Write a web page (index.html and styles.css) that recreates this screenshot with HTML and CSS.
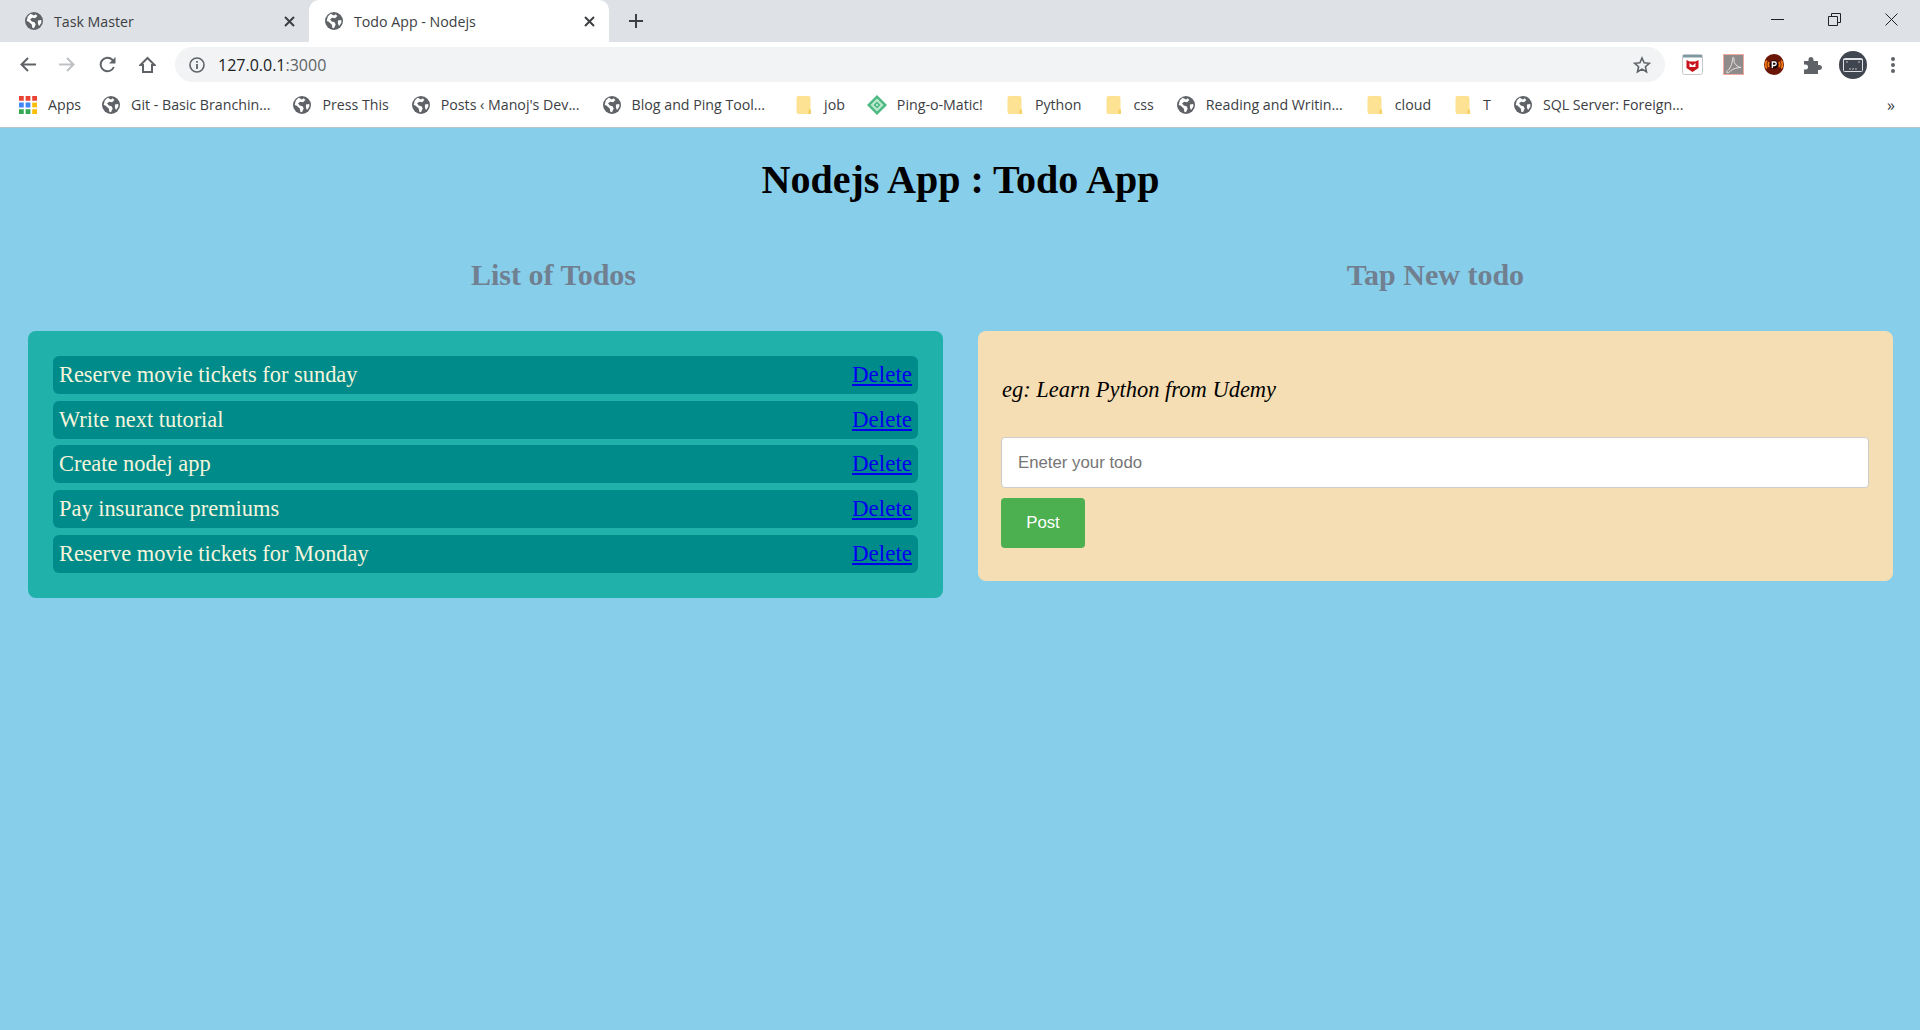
FILE: index.html
```html
<!DOCTYPE html>
<html lang="en">
<head>
    <meta charset="UTF-8">
    <meta name="viewport" content="width=device-width, initial-scale=1.0">
    <title>Todo App - Nodejs</title>
    <link rel="stylesheet" href="styles.css">
</head>
<body>
    <svg class="sprites" width="0" height="0">
        <symbol id="globe" viewBox="0 0 16 16">
            <circle cx="8" cy="8" r="8" fill="#5f6368"/>
            <path d="M5 1.500 8 3 9.500 2 11 3.500 9 5.500 6.500 5 4.500 6.500 6 8.500 8.500 9 9.500 11 8 14.500 6.500 14 6 11 3 8.500 1.500 8 2.500 4z M11.500 7.500 14.500 7 14.500 9.500 12.500 12.500 11.500 10.500z" fill="#fff"/>
        </symbol>
        <symbol id="folder" viewBox="0 0 16 18">
            <path d="M2 0h10a2 2 0 0 1 2 2v16H2a2 2 0 0 1-2-2V2a2 2 0 0 1 2-2z" transform="translate(.5 0)" fill="#fde293"/>
            <path d="M12.500 18v-3.500l1-1.500 1.500 1v4z" fill="#f5cf5f"/>
        </symbol>
        <symbol id="close" viewBox="0 0 11 11">
            <path d="M1 1l9 9M10 1l-9 9" stroke="#3c4043" stroke-width="2" fill="none"/>
        </symbol>
    </svg>

    <header class="chrome">
        <div class="tabstrip">
            <div class="tab">
                <svg class="fav"><use href="#globe"/></svg>
                <span class="tab-title">Task Master</span>
                <svg class="tab-close"><use href="#close"/></svg>
            </div>
            <div class="tab active">
                <svg class="fav"><use href="#globe"/></svg>
                <span class="tab-title">Todo App - Nodejs</span>
                <svg class="tab-close"><use href="#close"/></svg>
            </div>
            <svg class="newtab" width="14" height="14" viewBox="0 0 14 14"><path d="M7 0v14M0 7h14" stroke="#3c4043" stroke-width="2"/></svg>
            <div class="winbtns">
                <svg width="13" height="13" viewBox="0 0 13 13"><path d="M0 6.500h13" stroke="#222" fill="none"/></svg>
                <svg width="13" height="13" viewBox="0 0 13 13"><path d="M.5 3.500h9v9h-9zM3.500 3.500v-3h9v9h-3" stroke="#222" fill="none"/></svg>
                <svg width="13" height="13" viewBox="0 0 13 13"><path d="M.5.500l12 12M12.500.500l-12 12" stroke="#222" fill="none"/></svg>
            </div>
        </div>

        <div class="toolbar">
            <svg class="navicon" viewBox="0 0 17 17"><path d="M17 8.500H2.500M9 2 2.500 8.500 9 15" stroke="#5f6368" stroke-width="2" fill="none"/></svg>
            <svg class="navicon" viewBox="0 0 17 17"><path d="M0 8.500h14.500M8 2l6.500 6.500L8 15" stroke="#bdc1c6" stroke-width="2" fill="none"/></svg>
            <svg class="navicon" viewBox="0 0 17 17"><path d="M14.800 11A6.800 6.800 0 1 1 13.300 3.700L15 5.500" stroke="#5f6368" stroke-width="2" fill="none"/><path d="M16.500 1v6.500H10z" fill="#5f6368"/></svg>
            <svg class="navicon" viewBox="0 0 17 17"><path d="M8.500 2 1.500 9H4v7h9V9h2.500z" stroke="#5f6368" stroke-width="2" fill="none"/></svg>
            <div class="omnibox">
                <svg class="info" width="16" height="16" viewBox="0 0 16 16"><circle cx="8" cy="8" r="7" stroke="#5f6368" stroke-width="1.600" fill="none"/><path d="M8 7v5M8 4v1.800" stroke="#5f6368" stroke-width="1.800"/></svg>
                <span class="url">127.0.0.1<span class="url-port">:3000</span></span>
                <svg class="star" width="18" height="18" viewBox="0 0 18 18"><path d="m9 2 2.100 4.800 5.200.500-3.900 3.400 1.100 5.100L9 13.100l-4.500 2.700 1.100-5.100-3.900-3.400 5.200-.500z" stroke="#5f6368" stroke-width="1.600" fill="none"/></svg>
            </div>
            <div class="extensions">
                <svg width="21" height="21" viewBox="0 0 21 21"><rect x=".5" y=".5" width="20" height="20" rx="2" fill="#fff" stroke="#c4c7cb"/><rect x="1" y="1" width="19" height="2.500" fill="#7d98a1"/><path d="M4.500 6l3 1.500h6l3-1.500v8L10.500 18l-6-4z" fill="#c8141c"/><path d="M7.500 9l3 2.500 3-2.500v4h-6z" fill="#fff"/></svg>
                <svg width="21" height="21" viewBox="0 0 21 21"><rect x=".5" y=".5" width="20" height="20" fill="#8f8b8b" stroke="#f4a9a0"/><path d="M3.500 17.500c3.500-2 6-8 6-12.500 0-2.500 2-2.500 1.500 1-.5 3.500 3.500 7 7 7.500-3.500 0-8 1-10.500 3.500-2 2-4.500 2.500-4 .5z" stroke="#e8e4e4" fill="none"/></svg>
                <svg width="20" height="21" viewBox="0 0 20 21"><ellipse cx="10" cy="10.500" rx="10" ry="10.500" fill="#6a1505"/><path d="M2.800 6.500a8 8 0 0 0 0 8M17.200 6.500a8 8 0 0 1 0 8M5 8a5 5 0 0 0 0 5M15 8a5 5 0 0 1 0 5" stroke="#f07c10" stroke-width="1.800" fill="none"/><circle cx="10" cy="10.500" r="4.300" fill="#1c0502"/><path d="M8.300 14V8h2.200a1.700 1.700 0 0 1 0 3.500H8.300" stroke="#fff" stroke-width="1.300" fill="none"/></svg>
                <svg width="18" height="18" viewBox="0 0 18 18"><path d="M0 5h4.500V3.500a2.500 2.500 0 0 1 5 0V5H14v4h1.500a2.500 2.500 0 0 1 0 5H14v4H0v-4.500h1.500a2.500 2.500 0 0 0 0-5H0z" fill="#5f6368"/></svg>
                <svg class="avatar" width="28" height="28" viewBox="0 0 28 28"><circle cx="14" cy="14" r="14" fill="#3f4650"/><rect x="4.500" y="7.500" width="19" height="13" rx="1" fill="#3f4650" stroke="#dfe1e5"/><path d="M4.500 8.500h19" stroke="#dfe1e5"/><path d="M7 11h2M19 11h2M11.500 17.500l-1 .5 1 .5M16.500 17.500l1 .5-1 .5M14.500 17l-1 2" stroke="#dfe1e5" stroke-width=".8" fill="none"/></svg>
                <svg class="dots" width="6" height="16" viewBox="0 0 6 16"><circle cx="3" cy="2" r="2" fill="#5f6368"/><circle cx="3" cy="8" r="2" fill="#5f6368"/><circle cx="3" cy="14" r="2" fill="#5f6368"/></svg>
            </div>
        </div>

        <nav class="bookmarks">
            <a class="bm bm-apps">
                <svg class="fav" viewBox="0 0 17 17">
                    <path d="M0 0h4.500v4.500H0z M6.250 0h4.500v4.500h-4.500z M12.500 0H17v4.500h-4.500z" fill="#ea4335"/>
                    <path d="M0 6.250h4.500v4.500H0z M6.250 6.250h4.500v4.500h-4.500z" fill="#4285f4"/><path d="M12.500 6.250H17v4.500h-4.500z" fill="#fbbc04"/>
                    <path d="M0 12.500h4.500V17H0z M6.250 12.500h4.500V17h-4.500z" fill="#34a853"/><path d="M12.500 12.500H17V17h-4.500z" fill="#fbbc04"/>
                </svg>Apps</a>
            <a class="bm"><svg class="fav"><use href="#globe"/></svg>Git - Basic Branchin...</a>
            <a class="bm"><svg class="fav"><use href="#globe"/></svg>Press This</a>
            <a class="bm"><svg class="fav"><use href="#globe"/></svg>Posts ‹ Manoj's Dev...</a>
            <a class="bm"><svg class="fav"><use href="#globe"/></svg>Blog and Ping Tool...</a>
            <a class="bm bm-job"><svg class="fav"><use href="#folder"/></svg>job</a>
            <a class="bm"><svg class="fav ping" viewBox="0 0 20 20"><path d="M10 0 20 10 10 20 0 10z" fill="#4cba82"/><path d="M10 3.500l6.500 6.500-6.500 6.500L3.500 10z" fill="#bfe8d0"/><path d="M10 6.500l3.500 3.500-3.500 3.500L6.500 10z" fill="#4cba82"/><path d="M10 8.800l1.200 1.200-1.200 1.200L8.800 10z" fill="#dff3e8"/></svg>Ping-o-Matic!</a>
            <a class="bm"><svg class="fav"><use href="#folder"/></svg>Python</a>
            <a class="bm"><svg class="fav"><use href="#folder"/></svg>css</a>
            <a class="bm"><svg class="fav"><use href="#globe"/></svg>Reading and Writin...</a>
            <a class="bm"><svg class="fav"><use href="#folder"/></svg>cloud</a>
            <a class="bm"><svg class="fav"><use href="#folder"/></svg>T</a>
            <a class="bm"><svg class="fav"><use href="#globe"/></svg>SQL Server: Foreign...</a>
            <span class="bm-more">&raquo;</span>
        </nav>
    </header>

    <main class="page">
        <h1>Nodejs App : Todo App</h1>
        <div class="columns">
            <section class="col">
                <h2 class="heading-list">List of Todos</h2>
                <ul class="todo-list">
                    <li>Reserve movie tickets for sunday <a href="#">Delete</a></li>
                    <li>Write next tutorial <a href="#">Delete</a></li>
                    <li>Create nodej app <a href="#">Delete</a></li>
                    <li>Pay insurance premiums <a href="#">Delete</a></li>
                    <li>Reserve movie tickets for Monday <a href="#">Delete</a></li>
                </ul>
            </section>
            <section class="col">
                <h2>Tap New todo</h2>
                <form class="todo-form">
                    <p class="hint">eg: Learn Python from Udemy</p>
                    <input type="text" placeholder="Eneter your todo">
                    <button type="button">Post</button>
                </form>
            </section>
        </div>
    </main>
</body>
</html>
```

FILE: styles.css
```css
* {
    box-sizing: border-box;
}
html, body {
    height: 100%;
}
body {
    margin: 0;
    display: flex;
    flex-direction: column;
    overflow: hidden;
    background-color: skyblue;
    font-family: "Liberation Serif", serif;
}
.sprites {
    position: absolute;
}

/* browser chrome */
.chrome {
    flex: none;
    font-family: "Open Sans", sans-serif;
    font-size: 14.200px;
    color: #3c4043;
    background-color: white;
}
.tabstrip {
    height: 42px;
    display: flex;
    align-items: center;
    background-color: #dee1e6;
}
.tab {
    width: 300px;
    height: 42px;
    padding: 0 14px 0 16px;
    display: flex;
    align-items: center;
}
.tab:first-child {
    width: 309px;
    padding-left: 25px;
}
.tab.active {
    background-color: white;
    border-radius: 10px 10px 0 0;
}
.tab-title {
    flex: 1;
    margin-left: 11px;
}
.tab-close {
    width: 11px;
    height: 11px;
    flex: none;
}
.newtab {
    margin-left: 20px;
}
.winbtns {
    margin-left: auto;
    margin-bottom: 3px;
    padding-right: 22px;
    display: flex;
    gap: 44px;
}
.fav {
    width: 18px;
    height: 18px;
    flex: none;
}
.toolbar {
    height: 45px;
    padding-left: 19px;
    display: flex;
    align-items: center;
}
.navicon {
    width: 17px;
    height: 17px;
    margin-right: 23px;
    flex: none;
}
.omnibox {
    width: 1490px;
    height: 35px;
    margin-left: -4px;
    padding: 0 14px;
    display: flex;
    align-items: center;
    flex: none;
    background-color: #f1f3f4;
    border-radius: 18px;
}
.url {
    flex: 1;
    margin-left: 13px;
    font-size: 16px;
    color: #202124;
}
.url-port {
    color: #5f6368;
}
.extensions {
    padding-left: 17px;
    display: flex;
    align-items: center;
    gap: 20px;
}
.avatar {
    margin-left: -3px;
}
.dots {
    margin-left: 3px;
}
.bookmarks {
    height: 41px;
    padding: 0 0 5px 19px;
    display: flex;
    align-items: center;
    gap: 23px;
    border-bottom: 1px solid #b6c6d0;
}
.bm {
    display: flex;
    align-items: center;
    gap: 11px;
    white-space: nowrap;
}
.bm-apps {
    margin-right: -2px;
}
.bm-job {
    margin-left: 7px;
}
.bm .ping {
    width: 20px;
    height: 20px;
    margin: 0 -1px;
}
.bm-more {
    margin-left: auto;
    padding-right: 25px;
    font-size: 16px;
}

/* page */
.page {
    flex: 1;
    padding: 0 27px 0 28px;
}
h1 {
    margin: 29px 0 0;
    text-align: center;
    font-size: 40px;
    line-height: 46px;
}
.columns {
    margin-top: 55px;
    display: flex;
    gap: 35px;
}
.col {
    flex: 1;
    min-width: 0;
}
h2 {
    height: 34px;
    margin: 0 0 39px;
    text-align: center;
    font-size: 30px;
    line-height: 34px;
    color: slategray;
}
.heading-list {
    padding-left: 136px;
}
.todo-list {
    margin: 0;
    padding: 25px;
    list-style: none;
    background-color: lightseagreen;
    border-radius: 8px;
}
.todo-list li {
    height: 38px;
    margin-bottom: 6.700px;
    padding: 0 6px;
    display: flex;
    align-items: center;
    justify-content: space-between;
    font-size: 22.400px;
    color: beige;
    background-color: darkcyan;
    border-radius: 6px;
}
.todo-list li:last-child {
    margin-bottom: 0;
}
.todo-list a {
    font-size: 23px;
}
.todo-form {
    padding: 23px 24px 33px 23px;
    background-color: wheat;
    border-radius: 8px;
}
.hint {
    margin: 22px 0 34px 1px;
    font-size: 22.500px;
    font-style: italic;
    line-height: 27px;
}
.todo-form input {
    width: 100%;
    height: 51px;
    padding: 0 16px;
    display: block;
    font-family: "Liberation Sans", sans-serif;
    font-size: 16.800px;
    border: 1px solid #ccc;
    border-radius: 4px;
}
.todo-form button {
    width: 84px;
    height: 50px;
    margin-top: 10px;
    display: block;
    font-family: "Liberation Sans", sans-serif;
    font-size: 16.800px;
    color: white;
    background-color: #4CAF50;
    border: none;
    border-radius: 4px;
}
```
